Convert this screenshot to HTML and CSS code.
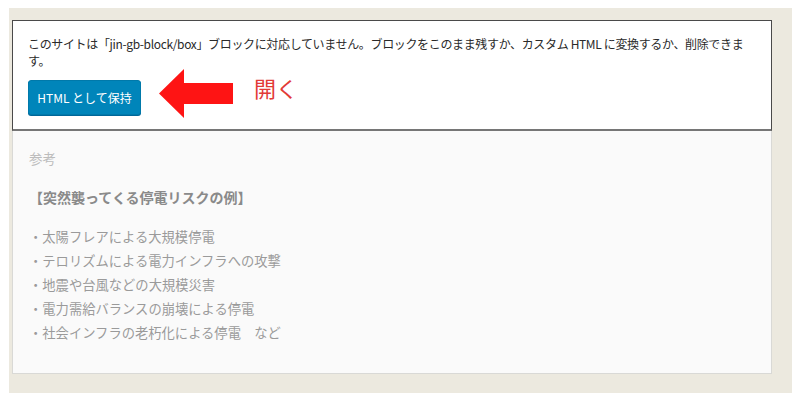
FILE: index.html
```html
<!DOCTYPE html>
<html lang="ja">
<head>
  <meta charset="UTF-8">
  <title>ブロックエディター</title>
  <link rel="stylesheet" href="styles.css">
</head>
<body>

  <div class="editor">

    <div class="warning">
      <p class="warning-text">このサイトは「jin-gb-block/box」ブロックに対応していません。ブロックをこのまま残すか、カスタム HTML に変換するか、削除できます。</p>
      <div class="warning-actions">
        <button class="btn-keep">HTML として保持</button>
        <svg class="arrow" width="74" height="49" viewBox="0 0 74 49">
          <polygon points="0,24.5 25,0 25,14 74,14 74,35 25,35 25,49" fill="#fe1414"/>
        </svg>
        <span class="open-label">開く</span>
      </div>
    </div>

    <!-- 中身のプレビュー（無効化されたブロック） -->
    <div class="preview">
      <p class="preview-title">参考</p>
      <p class="preview-heading">【突然襲ってくる停電リスクの例】</p>
      <ul class="preview-list">
        <li>・太陽フレアによる大規模停電</li>
        <li>・テロリズムによる電力インフラへの攻撃</li>
        <li>・地震や台風などの大規模災害</li>
        <li>・電力需給バランスの崩壊による停電</li>
        <li>・社会インフラの老朽化による停電　など</li>
      </ul>
    </div>

  </div>

</body>
</html>
```

FILE: styles.css
```css
body {
  margin: 0;
  background: #ffffff;
  font-family: "Noto Sans CJK JP", sans-serif;
}

.editor {
  margin: 8px 8px 0 9px;
  height: 385px;
  box-sizing: border-box;
  padding: 12px 20px 0 3px;
  background: #ece9df;
}

.warning {
  background: #ffffff;
  border: 1px solid #4a4a4a;
  border-bottom: 2px solid #767676;
  padding: 14px 15px 11px 15px;
}

.warning-text {
  margin: 0;
  font-size: 12px;
  line-height: 17px;
  letter-spacing: -0.35px;
  color: #2a2a2a;
}

.warning-actions {
  display: flex;
  align-items: flex-start;
}

.btn-keep {
  margin-top: 11px;
  height: 35px;
  width: 113px;
  padding: 0;
  font-family: "Noto Sans CJK JP", sans-serif;
  font-size: 12px;
  color: #ffffff;
  background: #0085ba;
  border: 1px solid #0079aa;
  border-radius: 3px;
  box-shadow: 0 1px 0 #006799;
  cursor: pointer;
}

.arrow {
  display: block;
  margin-left: 18px;
}

.open-label {
  margin-left: 21px;
  margin-top: 6px;
  font-size: 22px;
  line-height: 24px;
  color: #e23a36;
}

.preview {
  height: 243px;
  box-sizing: border-box;
  background: #fafafa;
  border: 1px solid #d9d9d6;
  border-top: none;
  padding: 15px 16px 0 16px;
}

.preview p {
  margin: 0;
}

.preview-title {
  font-size: 13.5px;
  line-height: 24px;
  color: #bcbcbc;
}

.preview-heading {
  margin-top: 15px !important;
  font-size: 14px;
  line-height: 24px;
  font-weight: bold;
  color: #8a8a8a;
}

.preview-list {
  list-style: none;
  margin: 16px 0 0 0;
  padding: 0;
  font-size: 13.3px;
  line-height: 24px;
  color: #9a9a9a;
}
```
